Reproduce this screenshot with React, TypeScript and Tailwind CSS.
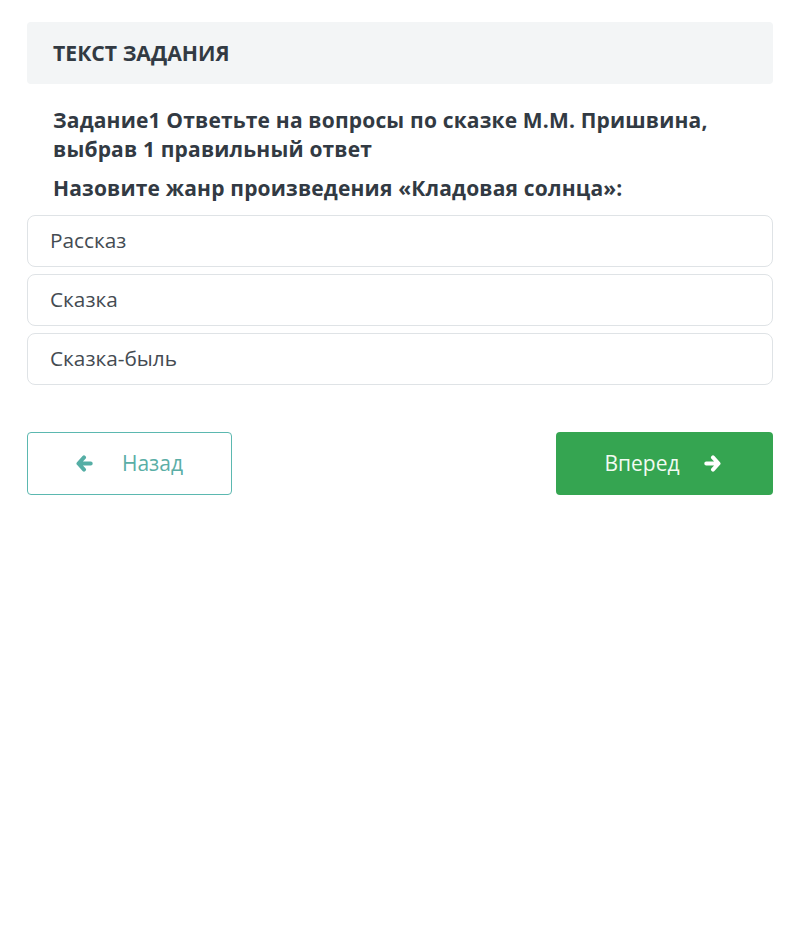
import React from "react";

function Arrow({ dir, className }: { dir: "left" | "right"; className?: string }) {
  return (
    <svg
      viewBox="0 0 18 18"
      className={className}
      fill="none"
      stroke="currentColor"
      strokeWidth={4.2}
      strokeLinecap="round"
      strokeLinejoin="round"
      style={dir === "right" ? { transform: "scaleX(-1)" } : undefined}
    >
      <path d="M8.5 2.6 L2.6 9 L8.5 15.4 M3.2 9 H15.6" />
    </svg>
  );
}

export default function App() {
  const options = ["Рассказ", "Сказка", "Сказка-быль"];
  return (
    <div
      className="min-h-[938px] w-full bg-white pl-[27px] pr-[20px] pt-[22px] text-[#333b44]"
      style={{ fontFamily: '"Open Sans", sans-serif' }}
    >
      <div className="flex h-[62px] items-center rounded-[4px] bg-[#f3f5f6] px-[26px]">
        <span className="text-[21.2px] font-bold uppercase text-[#323a43]">Текст задания</span>
      </div>
      <div className="px-[26px] pt-[22px]">
        <p className="text-[21px] font-bold leading-[29px] tracking-[0.17px] text-[#323a43]">
          Задание1 Ответьте на вопросы по сказке М.М. Пришвина, выбрав 1 правильный ответ
        </p>
        <p className="mt-[10px] text-[21px] font-bold leading-[29px] tracking-[0.17px] text-[#323a43]">
          Назовите жанр произведения «Кладовая солнца»:
        </p>
      </div>
      <div className="mt-[12px] flex flex-col gap-[7px]">
        {options.map((o) => (
          <div
            key={o}
            className="flex h-[52px] items-center rounded-[8px] border border-[#dfe3e6] bg-white px-[22px] text-[20.8px] text-[#444b52]"
          >
            {o}
          </div>
        ))}
      </div>
      <div className="mt-[47px] flex items-center justify-between">
        <button className="flex h-[63px] w-[205px] items-center justify-center gap-[29px] rounded-[4px] border border-[#5bb8b0] bg-white text-[21px] text-[#5aaea6]">
          <Arrow dir="left" className="h-[17px] w-[17px] text-[#55aea5]" />
          <span>Назад</span>
        </button>
        <button className="flex h-[63px] w-[217px] items-center justify-center gap-[24px] rounded-[4px] bg-[#35a551] pr-[4px] text-[21px] text-[#f1fbf2]">
          <span>Вперед</span>
          <Arrow dir="right" className="h-[17px] w-[17px] text-white" />
        </button>
      </div>
    </div>
  );
}
